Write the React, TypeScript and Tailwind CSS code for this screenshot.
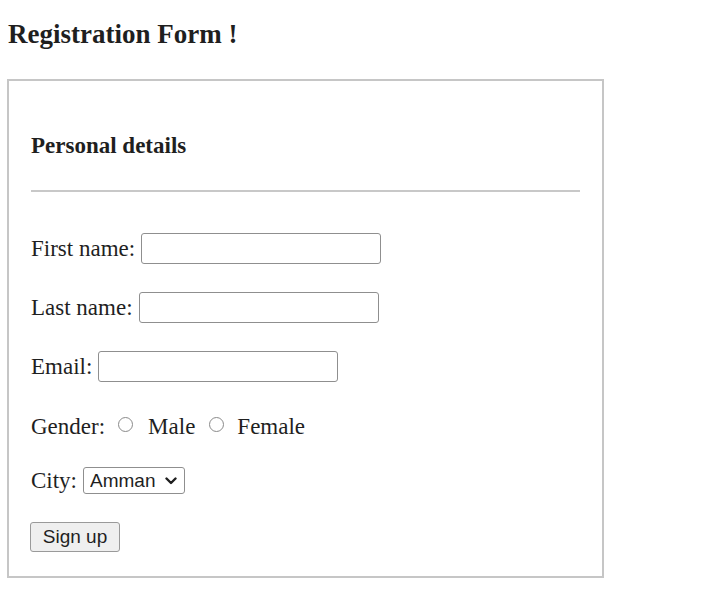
import React from 'react';

const serif = "font-['Liberation_Serif','Times_New_Roman',serif]";
const sans = "font-['Liberation_Sans',Arial,sans-serif]";

const TextField: React.FC<{ label: string; top: string }> = ({ label, top }) => (
  <div className={`flex items-center h-[31px] ${top}`}>
    <label className="text-[23px] leading-[27px]">{label}</label>
    <input
      type="text"
      className="ml-[6px] w-[240px] h-[31px] border border-[#8f8f8f] rounded-[3px] bg-white outline-none"
    />
  </div>
);

const Radio: React.FC<{ name: string; className?: string }> = ({ name, className = '' }) => (
  <span
    role="radio"
    aria-label={name}
    className={`inline-block w-[15px] h-[15px] min-w-[15px] rounded-full border-[1.5px] border-[#8a8a8a] bg-white mb-[5px] ${className}`}
  />
);

export default function App() {
  return (
    <div className={`min-h-screen bg-white text-[#1f1f1f] ${serif}`}>
      <h3 className="pl-2 pt-[19px] text-[27px] leading-[31px] font-bold">Registration Form !</h3>

      <div className="ml-[7px] mt-[29px] w-[597px] h-[499px] border-2 border-[#c6c6c6] px-[22px] pt-[51px]">
        <h4 className="text-[23px] leading-[27px] font-bold">Personal details</h4>
        <div className="mt-[31px] h-[2px] bg-[#c8c8c8]" />

        <TextField label="First name:" top="mt-[41px]" />
        <TextField label="Last name:" top="mt-[28px]" />
        <TextField label="Email:" top="mt-[28px]" />

        <div className="flex items-center h-[31px] mt-[29px] text-[23px] leading-[27px]">
          <span>Gender:</span>
          <Radio name="Male" className="ml-[13px]" />
          <span className="ml-[15px]">Male</span>
          <Radio name="Female" className="ml-[14px]" />
          <span className="ml-[13px]">Female</span>
        </div>

        <div className="flex items-center h-[27px] mt-[25px]">
          <span className="text-[23px] leading-[27px]">City:</span>
          <div className="relative ml-[6px]">
            <select
              className={`appearance-none w-[102px] h-[27px] border border-[#8f8f8f] rounded-[3px] bg-white pl-[6px] text-[19px] leading-[25px] text-[#1f1f1f] outline-none ${sans}`}
            >
              <option>Amman</option>
              <option>Irbid</option>
              <option>Zarqa</option>
            </select>
            <svg
              className="absolute right-[8px] top-[10px] pointer-events-none"
              width="12"
              height="8"
              viewBox="0 0 12 8"
              fill="none"
            >
              <path d="M1.5 1.5 L6 6 L10.5 1.5" stroke="#1f1f1f" strokeWidth="2.4" strokeLinecap="round" strokeLinejoin="round" />
            </svg>
          </div>
        </div>

        <button
          className={`-ml-px mt-[28px] w-[90px] h-[30px] border border-[#9a9a9a] bg-[#efefef] rounded-[3px] text-[19px] leading-[28px] text-[#1f1f1f] ${sans}`}
        >
          Sign up
        </button>
      </div>
    </div>
  );
}
